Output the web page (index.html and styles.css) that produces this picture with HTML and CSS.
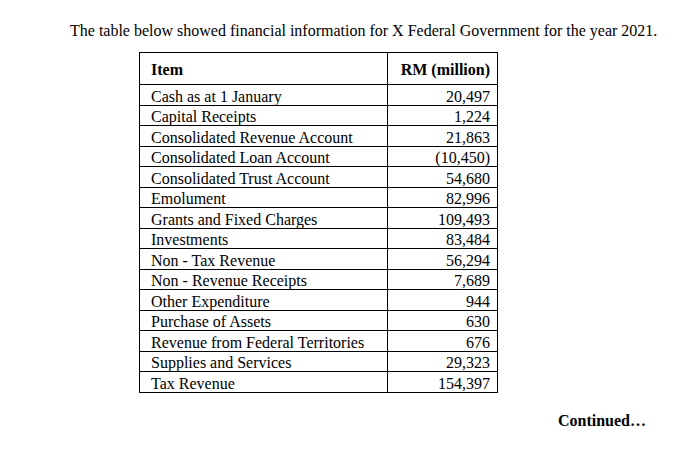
FILE: index.html
```html
<!DOCTYPE html>
<html>
<head>
<meta charset="utf-8">
<link rel="stylesheet" href="styles.css">
</head>
<body>
<div class="page">
  <p class="intro">The table below showed financial information for X Federal Government for the year 2021.</p>
  <table class="fin">
    <thead>
      <tr class="head"><th class="item">Item</th><th class="amt">RM (million)</th></tr>
    </thead>
    <tbody>
      <tr class="r21"><td>Cash as at 1 January</td><td class="num">20,497</td></tr>
      <tr class="r20"><td>Capital Receipts</td><td class="num">1,224</td></tr>
      <tr class="r21"><td>Consolidated Revenue Account</td><td class="num">21,863</td></tr>
      <tr class="r20"><td>Consolidated Loan Account</td><td class="num">(10,450)</td></tr>
      <tr class="r21"><td>Consolidated Trust Account</td><td class="num">54,680</td></tr>
      <tr class="r20"><td>Emolument</td><td class="num">82,996</td></tr>
      <tr class="r21"><td>Grants and Fixed Charges</td><td class="num">109,493</td></tr>
      <tr class="r20"><td>Investments</td><td class="num">83,484</td></tr>
      <tr class="r21"><td>Non - Tax Revenue</td><td class="num">56,294</td></tr>
      <tr class="r20"><td>Non - Revenue Receipts</td><td class="num">7,689</td></tr>
      <tr class="r21"><td>Other Expenditure</td><td class="num">944</td></tr>
      <tr class="r20"><td>Purchase of Assets</td><td class="num">630</td></tr>
      <tr class="r21"><td>Revenue from Federal Territories</td><td class="num">676</td></tr>
      <tr class="r20"><td>Supplies and Services</td><td class="num">29,323</td></tr>
      <tr class="r21"><td>Tax Revenue</td><td class="num">154,397</td></tr>
    </tbody>
  </table>
  <p class="cont">Continued…</p>
</div>
</body>
</html>
```
FILE: styles.css
```css
html, body {
  margin: 0;
  padding: 0;
  background: #ffffff;
}
body {
  font-family: "Liberation Serif", "Times New Roman", serif;
  color: #000000;
}
.page {
  width: 699px;
  height: 461px;
  padding-top: 22px;
  box-sizing: border-box;
}
.intro {
  margin: 0 0 12px 70px;
  font-size: 16px;
  line-height: 18px;
  white-space: nowrap;
}
.fin {
  margin-left: 139px;
  border-collapse: collapse;
  table-layout: fixed;
  width: 359px;
  font-size: 16px;
}
.fin th, .fin td {
  border: 1px solid #000;
  padding: 0 7px 0 11px;
  line-height: 17px;
  white-space: nowrap;
}
.fin th {
  font-weight: bold;
  text-align: left;
  padding-top: 1px;
}
.fin .item { width: 229px; }
.fin .amt { text-align: right; }
.head { height: 32px; }
.r21 { height: 21px; }
.r20 { height: 20px; }
.fin td { padding-top: 2px; padding-bottom: 0; }
.num { text-align: right; }
.cont {
  margin: 19px 53px 0 0;
  text-align: right;
  font-weight: bold;
  font-size: 16px;
  line-height: 18px;
}
```
